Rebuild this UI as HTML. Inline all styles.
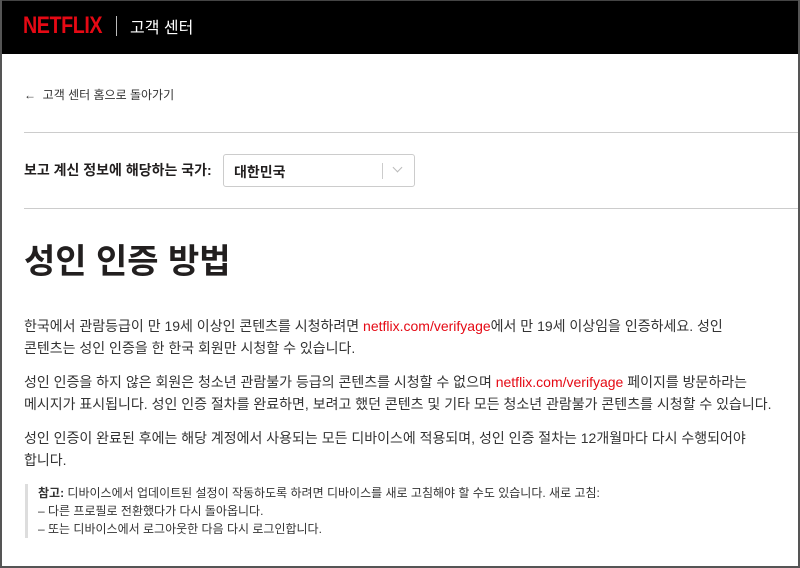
<!DOCTYPE html>
<html><head><meta charset="utf-8"><style>
*{margin:0;padding:0;box-sizing:border-box}
html,body{width:800px;height:568px;overflow:hidden;background:#fff}
body{font-family:"Liberation Sans","Noto Sans CJK KR",sans-serif;color:#221f1f;position:relative}
.bd{position:absolute;left:0;top:0;width:800px;height:568px;border:2px solid #555;border-top:none;pointer-events:none}
.hd{position:absolute;left:0;top:0;width:800px;height:54px;background:#000;border:1px solid #444;border-bottom:none}
.logo{position:absolute;left:22px;top:11px;color:#e50914;font:bold 24px "Liberation Sans",sans-serif;letter-spacing:-0.5px;transform:scaleX(0.82);transform-origin:left}
.sep{position:absolute;left:115px;top:15px;width:1px;height:20px;background:#bbb}
.hc{position:absolute;left:129px;top:13px;color:#fff;font-size:16px}
.a{position:absolute;left:24px;top:86px;font-size:12px;color:#333}
.hr{position:absolute;left:24px;right:0;height:1px;background:#ccc}
.lbl{position:absolute;left:24px;top:160px;font-size:14px;font-weight:bold}
.sel{position:absolute;left:223px;top:154px;width:192px;height:33px;border:1px solid #ccc;border-radius:3px;font-size:14px;font-weight:bold;padding:7px 10px}
.sel .d{position:absolute;left:158px;top:8px;width:1px;height:16px;background:#ccc}
.sel .c{position:absolute;left:170px;top:9px;width:7px;height:7px;border-right:1px solid #bbb;border-bottom:1px solid #bbb;transform:rotate(45deg)}
h1{position:absolute;left:24px;top:240px;font-size:34px;font-weight:bold;line-height:44px;color:#221f1f}
.p{position:absolute;left:24px;width:752px;font-size:14px;line-height:21.5px;color:#333;word-break:keep-all}
.r{color:#e50914}
.note{position:absolute;left:25px;top:484px;border-left:3px solid #ddd;padding-left:10px;font-size:12px;line-height:18px;color:#333}
</style></head><body>
<div class="hd"><div class="logo">NETFLIX</div><div class="sep"></div><div class="hc">고객 센터</div></div>
<div class="a">←&nbsp;&nbsp;고객 센터 홈으로 돌아가기</div>
<div class="hr" style="top:132px"></div>
<div class="lbl">보고 계신 정보에 해당하는 국가:</div>
<div class="sel">대한민국<span class="d"></span><span class="c"></span></div>
<div class="hr" style="top:208px"></div>
<h1>성인 인증 방법</h1>
<div class="p" style="top:316px">한국에서 관람등급이 만 19세 이상인 콘텐츠를 시청하려면 <span class="r">netflix.com/verifyage</span>에서 만 19세 이상임을 인증하세요. 성인 콘텐츠는 성인 인증을 한 한국 회원만 시청할 수 있습니다.</div>
<div class="p" style="top:372px">성인 인증을 하지 않은 회원은 청소년 관람불가 등급의 콘텐츠를 시청할 수 없으며 <span class="r">netflix.com/verifyage</span> 페이지를 방문하라는 메시지가 표시됩니다. 성인 인증 절차를 완료하면, 보려고 했던 콘텐츠 및 기타 모든 청소년 관람불가 콘텐츠를 시청할 수 있습니다.</div>
<div class="p" style="top:428px">성인 인증이 완료된 후에는 해당 계정에서 사용되는 모든 디바이스에 적용되며, 성인 인증 절차는 12개월마다 다시 수행되어야 합니다.</div>
<div class="note"><b>참고:</b> 디바이스에서 업데이트된 설정이 작동하도록 하려면 디바이스를 새로 고침해야 할 수도 있습니다. 새로 고침:<br>– 다른 프로필로 전환했다가 다시 돌아옵니다.<br>– 또는 디바이스에서 로그아웃한 다음 다시 로그인합니다.</div>
<div class="bd"></div>
</body></html>
